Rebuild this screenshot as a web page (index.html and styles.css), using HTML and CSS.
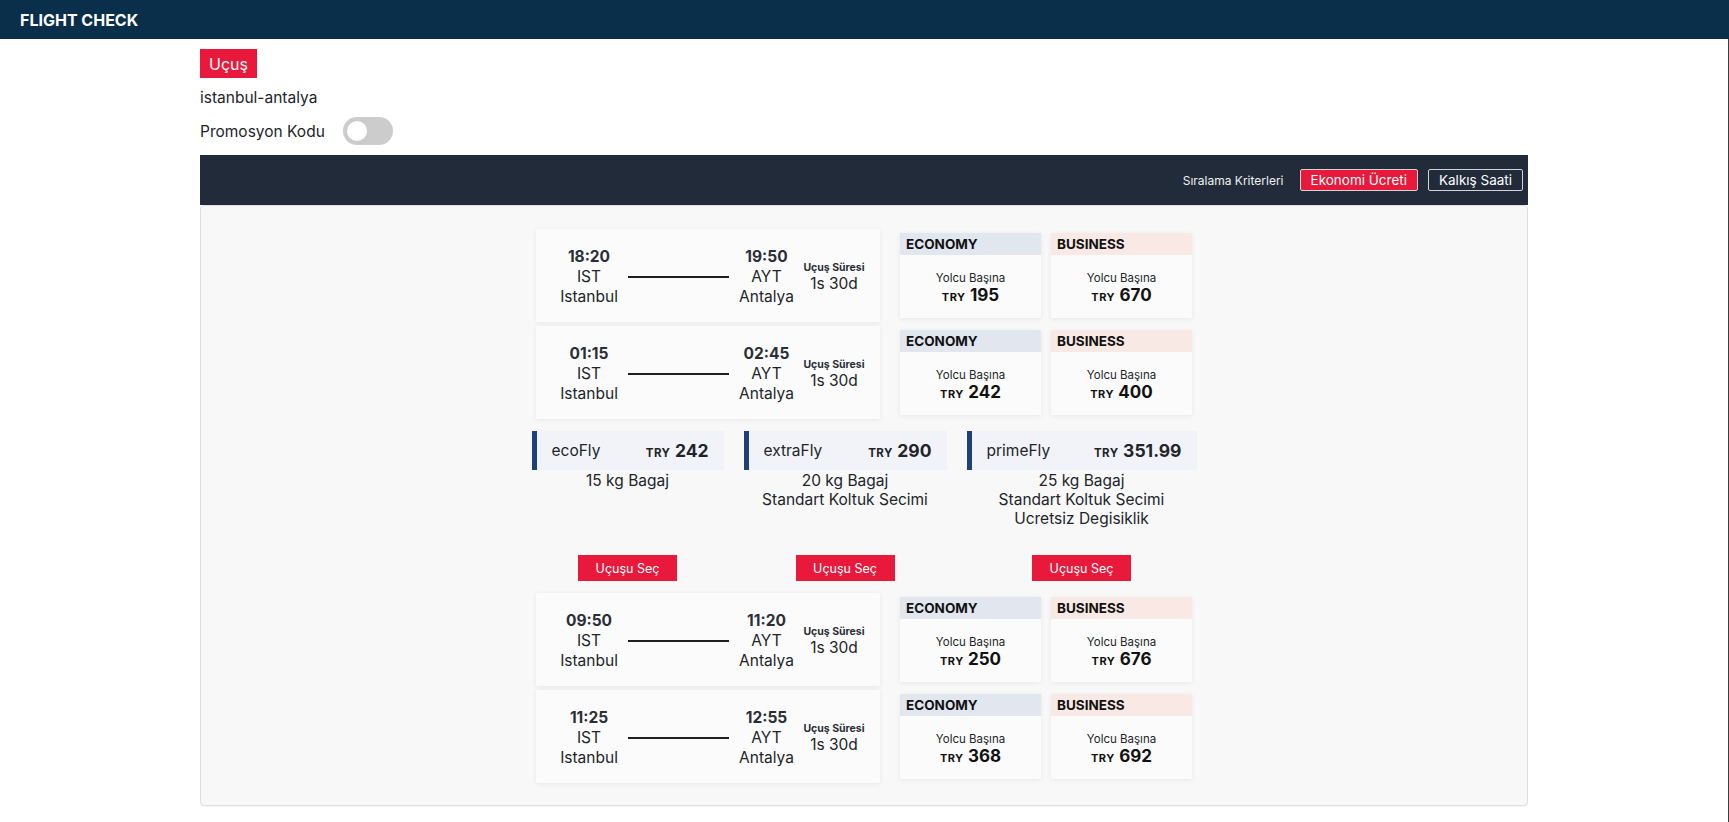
FILE: index.html
```html
<!DOCTYPE html>
<html lang="tr">
<head>
<meta charset="utf-8">
<title>Flight Check</title>
<link rel="stylesheet" href="styles.css">
</head>
<body>
<header class="topbar"><span class="brand">FLIGHT CHECK</span></header>
<div class="page">
  <div class="container">
    <button class="tab-btn">Uçuş</button>
    <div class="route">istanbul-antalya</div>
    <div class="promo">
      <span>Promosyon Kodu</span>
      <span class="switch"><span class="knob"></span></span>
    </div>
    <div class="sortbar">
      <span class="sort-label">Sıralama Kriterleri</span>
      <button class="sort-btn active">Ekonomi Ücreti</button>
      <button class="sort-btn">Kalkış Saati</button>
    </div>
    <div class="panel">
      <div class="list">
        <div class="flight-row">
          <div class="flight-card">
            <div class="ap"><div class="time">18:20</div><div>IST</div><div>Istanbul</div></div>
            <div class="line"></div>
            <div class="ap"><div class="time">19:50</div><div>AYT</div><div>Antalya</div></div>
            <div class="dur"><div class="dur-label">Uçuş Süresi</div><div class="dur-val">1s 30d</div></div>
          </div>
          <div class="price-card">
            <div class="pc-head eco">ECONOMY</div>
            <div class="pc-body"><div class="per">Yolcu Başına</div><div class="amount"><span class="cur">TRY</span> <span class="num">195</span></div></div>
          </div>
          <div class="price-card">
            <div class="pc-head bus">BUSINESS</div>
            <div class="pc-body"><div class="per">Yolcu Başına</div><div class="amount"><span class="cur">TRY</span> <span class="num">670</span></div></div>
          </div>
        </div>
        <div class="flight-row">
          <div class="flight-card">
            <div class="ap"><div class="time">01:15</div><div>IST</div><div>Istanbul</div></div>
            <div class="line"></div>
            <div class="ap"><div class="time">02:45</div><div>AYT</div><div>Antalya</div></div>
            <div class="dur"><div class="dur-label">Uçuş Süresi</div><div class="dur-val">1s 30d</div></div>
          </div>
          <div class="price-card">
            <div class="pc-head eco">ECONOMY</div>
            <div class="pc-body"><div class="per">Yolcu Başına</div><div class="amount"><span class="cur">TRY</span> <span class="num">242</span></div></div>
          </div>
          <div class="price-card">
            <div class="pc-head bus">BUSINESS</div>
            <div class="pc-body"><div class="per">Yolcu Başına</div><div class="amount"><span class="cur">TRY</span> <span class="num">400</span></div></div>
          </div>
        </div>

        <div class="fares">
          <div class="fare-col">
            <div class="fare-box fare-eco"><span class="fare-name">ecoFly</span><span class="fare-price"><span class="cur">TRY</span> <span class="num">242</span></span></div>
            <div class="features">15 kg Bagaj</div>
            <button class="select-btn">Uçuşu Seç</button>
          </div>
          <div class="fare-col">
            <div class="fare-box fare-extra"><span class="fare-name">extraFly</span><span class="fare-price"><span class="cur">TRY</span> <span class="num">290</span></span></div>
            <div class="features">20 kg Bagaj<br>Standart Koltuk Secimi</div>
            <button class="select-btn">Uçuşu Seç</button>
          </div>
          <div class="fare-col">
            <div class="fare-box fare-prime"><span class="fare-name">primeFly</span><span class="fare-price"><span class="cur">TRY</span> <span class="num">351.99</span></span></div>
            <div class="features">25 kg Bagaj<br>Standart Koltuk Secimi<br>Ucretsiz Degisiklik</div>
            <button class="select-btn">Uçuşu Seç</button>
          </div>
        </div>

        <div class="flight-row">
          <div class="flight-card">
            <div class="ap"><div class="time">09:50</div><div>IST</div><div>Istanbul</div></div>
            <div class="line"></div>
            <div class="ap"><div class="time">11:20</div><div>AYT</div><div>Antalya</div></div>
            <div class="dur"><div class="dur-label">Uçuş Süresi</div><div class="dur-val">1s 30d</div></div>
          </div>
          <div class="price-card">
            <div class="pc-head eco">ECONOMY</div>
            <div class="pc-body"><div class="per">Yolcu Başına</div><div class="amount"><span class="cur">TRY</span> <span class="num">250</span></div></div>
          </div>
          <div class="price-card">
            <div class="pc-head bus">BUSINESS</div>
            <div class="pc-body"><div class="per">Yolcu Başına</div><div class="amount"><span class="cur">TRY</span> <span class="num">676</span></div></div>
          </div>
        </div>
        <div class="flight-row">
          <div class="flight-card">
            <div class="ap"><div class="time">11:25</div><div>IST</div><div>Istanbul</div></div>
            <div class="line"></div>
            <div class="ap"><div class="time">12:55</div><div>AYT</div><div>Antalya</div></div>
            <div class="dur"><div class="dur-label">Uçuş Süresi</div><div class="dur-val">1s 30d</div></div>
          </div>
          <div class="price-card">
            <div class="pc-head eco">ECONOMY</div>
            <div class="pc-body"><div class="per">Yolcu Başına</div><div class="amount"><span class="cur">TRY</span> <span class="num">368</span></div></div>
          </div>
          <div class="price-card">
            <div class="pc-head bus">BUSINESS</div>
            <div class="pc-body"><div class="per">Yolcu Başına</div><div class="amount"><span class="cur">TRY</span> <span class="num">692</span></div></div>
          </div>
        </div>
      </div>
    </div>
  </div>
</div>
</body>
</html>
```

FILE: styles.css
```css
* { box-sizing: border-box; }

body {
  margin: 0;
  font-family: Inter, "Noto Sans", sans-serif;
  font-size: 15.5px;
  color: #212529;
  background: #fff;
}

.topbar {
  height: 39px;
  background: #0a2f4b;
  display: flex;
  align-items: center;
  padding-left: 20px;
}

.brand {
  color: #fff;
  font-weight: 700;
  font-size: 16px;
}

.page {
  border-right: 1px solid #3c3c3c;
  min-height: calc(100vh - 39px);
}

.container {
  width: 1328px;
  margin: 0 auto;
  padding-top: 10px;
}

.tab-btn {
  display: block;
  height: 29px;
  padding: 0 9px;
  margin: 0;
  border: 0;
  background: #e8193a;
  color: #fff;
  font-family: inherit;
  font-size: 16px;
}

.route {
  margin-top: 8px;
  line-height: 24px;
}

.promo {
  margin-top: 7px;
  height: 28px;
  display: flex;
  align-items: center;
  gap: 18px;
}

.switch {
  width: 50px;
  height: 28px;
  border-radius: 14px;
  background: #cccccc;
  display: flex;
  align-items: center;
  padding: 0 4px;
}

.knob {
  width: 20px;
  height: 20px;
  border-radius: 50%;
  background: #fff;
}

.sortbar {
  margin-top: 10px;
  height: 50px;
  background: #222b3a;
  display: flex;
  align-items: center;
  justify-content: flex-end;
  gap: 10px;
  padding-right: 5px;
}

.sort-label {
  color: #f0f0f0;
  font-size: 12px;
  margin-right: 6px;
}

.sort-btn {
  height: 22px;
  padding: 0 10px;
  margin: 0;
  font-family: inherit;
  font-size: 13.5px;
  color: #fff;
  background: transparent;
  border: 1px solid #d4d4d4;
  border-radius: 2px;
}

.sort-btn.active {
  background: #e8193a;
}

.panel {
  background: #f8f8f8;
  border: 1px solid #dedede;
  border-radius: 4px;
  box-shadow: 0 1px 1px rgba(0, 0, 0, 0.04);
  padding: 22px 0 21px;
}

.list {
  display: flex;
  flex-direction: column;
  align-items: center;
}

.flight-row {
  width: 656px;
  height: 95px;
  display: flex;
  align-items: flex-start;
  margin-bottom: 2px;
}

.flight-row:last-child {
  margin-bottom: 0;
}

.flight-card {
  width: 344px;
  height: 93px;
  margin-top: 1px;
  margin-right: 20px;
  background: #fbfbfb;
  box-shadow: 0 1px 5px rgba(0, 0, 0, 0.07);
  display: grid;
  grid-template-columns: 56px 101px 53px 60px;
  column-gap: 11px;
  align-items: center;
  padding: 2px 16px 0 25px;
}

.ap {
  text-align: center;
  line-height: 20px;
  white-space: nowrap;
  display: flex;
  flex-direction: column;
  align-items: center;
}

.time {
  font-weight: 700;
  color: #2a2e37;
}

.line {
  height: 2px;
  background: #1f1f1f;
}

.dur {
  text-align: center;
  white-space: nowrap;
  display: flex;
  flex-direction: column;
  align-items: center;
}

.dur-label {
  font-size: 10.5px;
  font-weight: 700;
  line-height: 14px;
  color: #2a2e37;
}

.dur-val {
  line-height: 18px;
}

.price-card {
  width: 141px;
  height: 85px;
  margin-top: 5px;
  background: #fbfbfb;
  box-shadow: 0 1px 5px rgba(0, 0, 0, 0.07);
}

.price-card + .price-card {
  margin-left: 10px;
}

.pc-head {
  height: 22px;
  line-height: 22px;
  padding-left: 6px;
  font-size: 13.5px;
  font-weight: 700;
  color: #111;
}

.pc-head.eco { background: #e1e6ef; }
.pc-head.bus { background: #f8e9e4; }

.pc-body {
  text-align: center;
  padding-top: 15px;
}

.per {
  font-size: 11.5px;
  line-height: 16px;
}

.amount {
  line-height: 18px;
  color: #111;
}

.cur {
  font-size: 11px;
  font-weight: 700;
  letter-spacing: 0.5px;
}

.num {
  font-size: 17px;
  font-weight: 700;
}

.fares {
  display: flex;
  gap: 20px;
  margin: 9px 0 11px;
}

.fare-col {
  display: flex;
  flex-direction: column;
  align-items: center;
}

.fare-box {
  height: 39px;
  display: flex;
  align-items: center;
  justify-content: space-between;
  background: #f1f3f8;
  border-left: 5px solid #1d4275;
  padding: 0 15px;
  white-space: nowrap;
}

.fare-eco { width: 192px; }
.fare-extra { width: 203px; }
.fare-prime { width: 230px; }

.fare-price .cur { font-size: 11.5px; }
.fare-price .num { font-size: 17.5px; }

.features {
  margin-top: 1px;
  margin-bottom: 27px;
  line-height: 19px;
  text-align: center;
  white-space: nowrap;
}

.select-btn {
  margin-top: auto;
  width: 99px;
  height: 26px;
  border: 0;
  padding: 0;
  background: #e8193a;
  color: #fff;
  font-family: inherit;
  font-size: 12.5px;
}
```
